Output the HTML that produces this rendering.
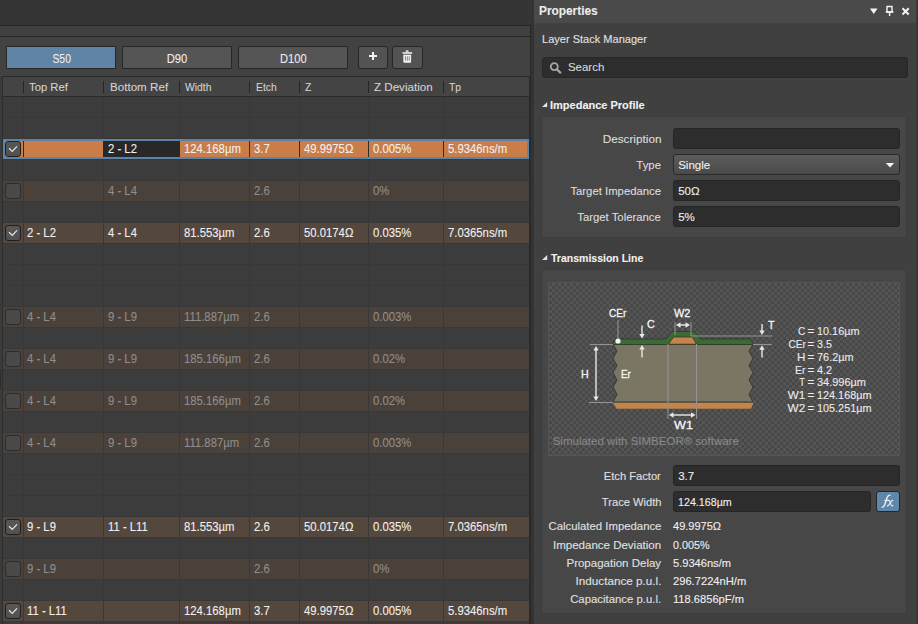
<!DOCTYPE html><html><head><meta charset="utf-8"><style>
html,body{margin:0;padding:0;}
body{width:918px;height:624px;position:relative;overflow:hidden;background:#353535;font-family:"Liberation Sans",sans-serif;}
div{position:absolute;box-sizing:border-box;-webkit-text-stroke:0.1px currentColor;}
svg{position:absolute;}
</style></head><body>
<div style="left:0px;top:25px;width:531px;height:1px;background:#262626;"></div>
<div style="left:0px;top:26px;width:530px;height:10px;background:#404040;"></div>
<div style="left:530px;top:26px;width:1px;height:11px;background:#262626;"></div>
<div style="left:0px;top:36px;width:531px;height:1px;background:#262626;"></div>
<div style="left:0px;top:37px;width:530px;height:39px;background:#424242;"></div>
<div style="left:530px;top:37px;width:1px;height:40px;background:#2a2a2a;"></div>
<div style="left:6px;top:46px;width:110px;height:23px;background:#6084a6;border:1px solid #262626;border-radius:1px;"></div>
<div style="left:122px;top:46px;width:110px;height:23px;background:#555555;border:1px solid #262626;border-radius:1px;"></div>
<div style="left:238px;top:46px;width:110px;height:23px;background:#555555;border:1px solid #262626;border-radius:1px;"></div>
<div style="left:50.62px;top:53.04px;font-size:12px;line-height:12px;color:#ececec;font-weight:normal;font-style:normal;font-family:'Liberation Sans';white-space:nowrap;transform:scaleX(0.8618);transform-origin:center 0;">S50</div>
<div style="left:166.39px;top:53.04px;font-size:12px;line-height:12px;color:#ececec;font-weight:normal;font-style:normal;font-family:'Liberation Sans';white-space:nowrap;transform:scaleX(0.9358);transform-origin:center 0;">D90</div>
<div style="left:278.86px;top:53.04px;font-size:12px;line-height:12px;color:#ececec;font-weight:normal;font-style:normal;font-family:'Liberation Sans';white-space:nowrap;transform:scaleX(0.9272);transform-origin:center 0;">D100</div>
<div style="left:358px;top:46px;width:30px;height:23px;background:#535353;border:1px solid #262626;border-radius:3px;"></div>
<div style="left:392px;top:46px;width:31px;height:23px;background:#535353;border:1px solid #262626;border-radius:3px;"></div>
<div style="left:369px;top:55px;width:8px;height:2px;background:#f2f2f2;"></div>
<div style="left:372px;top:52px;width:2px;height:8px;background:#f2f2f2;"></div>
<svg style="left:398px;top:46px" width="20" height="20" viewBox="398 46 20 20">
<rect x="405.6" y="50.2" width="3" height="2.2" rx="1" fill="#dcdcdc"/>
<rect x="402.5" y="52" width="9.6" height="2" fill="#cfcfcf"/>
<path d="M403.3 54.8 H411.1 V61.8 Q411.1 62.8 410.1 62.8 H404.3 Q403.3 62.8 403.3 61.8 Z" fill="#f2f2f2"/>
<rect x="404.9" y="56.3" width="1" height="4.4" fill="#858585"/>
<rect x="406.8" y="56.3" width="1" height="4.4" fill="#858585"/>
<rect x="408.7" y="56.3" width="1" height="4.4" fill="#858585"/>
</svg>
<div style="left:0px;top:76px;width:2px;height:548px;background:#3b3b3b;"></div>
<div style="left:2px;top:76px;width:1px;height:548px;background:#2e2e2e;"></div>
<div style="left:3px;top:76px;width:527px;height:1px;background:#2a2a2a;"></div>
<div style="left:3px;top:77px;width:526px;height:19px;background:#444444;"></div>
<div style="left:3px;top:96px;width:527px;height:1px;background:#2a2a2a;"></div>
<div style="left:3px;top:97px;width:526px;height:527px;background:#3c3c3c;"></div>
<div style="left:529px;top:76px;width:2px;height:548px;background:#2a2a2a;"></div>
<div style="left:0px;top:370px;width:1px;height:19px;background:#2e2e2e;"></div>
<div style="left:531px;top:0px;width:3px;height:624px;background:#333333;"></div>
<div style="left:23px;top:81px;width:1px;height:12px;background:#262626;"></div>
<div style="left:103px;top:81px;width:1px;height:12px;background:#262626;"></div>
<div style="left:179px;top:81px;width:1px;height:12px;background:#262626;"></div>
<div style="left:249px;top:81px;width:1px;height:12px;background:#262626;"></div>
<div style="left:299px;top:81px;width:1px;height:12px;background:#262626;"></div>
<div style="left:368px;top:81px;width:1px;height:12px;background:#262626;"></div>
<div style="left:443px;top:81px;width:1px;height:12px;background:#262626;"></div>
<div style="left:29.40px;top:82.39px;font-size:11px;line-height:11px;color:#d2d2d2;font-weight:normal;font-style:normal;font-family:'Liberation Sans';white-space:nowrap;transform:scaleX(1.0261);transform-origin:left 0;">Top Ref</div>
<div style="left:109.80px;top:82.39px;font-size:11px;line-height:11px;color:#d2d2d2;font-weight:normal;font-style:normal;font-family:'Liberation Sans';white-space:nowrap;transform:scaleX(1.0560);transform-origin:left 0;">Bottom Ref</div>
<div style="left:185.40px;top:82.39px;font-size:11px;line-height:11px;color:#d2d2d2;font-weight:normal;font-style:normal;font-family:'Liberation Sans';white-space:nowrap;transform:scaleX(0.9400);transform-origin:left 0;">Width</div>
<div style="left:255.80px;top:82.39px;font-size:11px;line-height:11px;color:#d2d2d2;font-weight:normal;font-style:normal;font-family:'Liberation Sans';white-space:nowrap;transform:scaleX(0.9400);transform-origin:left 0;">Etch</div>
<div style="left:305.40px;top:82.39px;font-size:11px;line-height:11px;color:#d2d2d2;font-weight:normal;font-style:normal;font-family:'Liberation Sans';white-space:nowrap;transform:scaleX(0.9400);transform-origin:left 0;">Z</div>
<div style="left:374.40px;top:82.39px;font-size:11px;line-height:11px;color:#d2d2d2;font-weight:normal;font-style:normal;font-family:'Liberation Sans';white-space:nowrap;transform:scaleX(1.0533);transform-origin:left 0;">Z Deviation</div>
<div style="left:449.40px;top:82.39px;font-size:11px;line-height:11px;color:#d2d2d2;font-weight:normal;font-style:normal;font-family:'Liberation Sans';white-space:nowrap;transform:scaleX(0.9400);transform-origin:left 0;">Tp</div>
<div style="left:3px;top:117px;width:526px;height:1px;background:#383838;"></div>
<div style="left:3px;top:138px;width:526px;height:1px;background:#383838;"></div>
<div style="left:3px;top:159px;width:526px;height:1px;background:#383838;"></div>
<div style="left:3px;top:180px;width:526px;height:1px;background:#383838;"></div>
<div style="left:3px;top:201px;width:526px;height:1px;background:#383838;"></div>
<div style="left:3px;top:222px;width:526px;height:1px;background:#383838;"></div>
<div style="left:3px;top:243px;width:526px;height:1px;background:#383838;"></div>
<div style="left:3px;top:264px;width:526px;height:1px;background:#383838;"></div>
<div style="left:3px;top:285px;width:526px;height:1px;background:#383838;"></div>
<div style="left:3px;top:306px;width:526px;height:1px;background:#383838;"></div>
<div style="left:3px;top:327px;width:526px;height:1px;background:#383838;"></div>
<div style="left:3px;top:348px;width:526px;height:1px;background:#383838;"></div>
<div style="left:3px;top:369px;width:526px;height:1px;background:#383838;"></div>
<div style="left:3px;top:390px;width:526px;height:1px;background:#383838;"></div>
<div style="left:3px;top:411px;width:526px;height:1px;background:#383838;"></div>
<div style="left:3px;top:432px;width:526px;height:1px;background:#383838;"></div>
<div style="left:3px;top:453px;width:526px;height:1px;background:#383838;"></div>
<div style="left:3px;top:474px;width:526px;height:1px;background:#383838;"></div>
<div style="left:3px;top:495px;width:526px;height:1px;background:#383838;"></div>
<div style="left:3px;top:516px;width:526px;height:1px;background:#383838;"></div>
<div style="left:3px;top:537px;width:526px;height:1px;background:#383838;"></div>
<div style="left:3px;top:558px;width:526px;height:1px;background:#383838;"></div>
<div style="left:3px;top:579px;width:526px;height:1px;background:#383838;"></div>
<div style="left:3px;top:600px;width:526px;height:1px;background:#383838;"></div>
<div style="left:3px;top:621px;width:526px;height:1px;background:#383838;"></div>
<div style="left:3px;top:642px;width:526px;height:1px;background:#383838;"></div>
<div style="left:23px;top:97px;width:1px;height:527px;background:#383838;"></div>
<div style="left:103px;top:97px;width:1px;height:527px;background:#383838;"></div>
<div style="left:179px;top:97px;width:1px;height:527px;background:#383838;"></div>
<div style="left:249px;top:97px;width:1px;height:527px;background:#383838;"></div>
<div style="left:299px;top:97px;width:1px;height:527px;background:#383838;"></div>
<div style="left:368px;top:97px;width:1px;height:527px;background:#383838;"></div>
<div style="left:443px;top:97px;width:1px;height:527px;background:#383838;"></div>
<div style="left:3px;top:139px;width:526px;height:20px;background:#5b84a8;"></div>
<div style="left:5px;top:141px;width:522px;height:16px;background:#c97d49;"></div>
<div style="left:103px;top:141px;width:77px;height:16px;background:#282828;"></div>
<div style="left:23px;top:141px;width:1px;height:16px;background:#2a2a2a;"></div>
<div style="left:249px;top:141px;width:1px;height:16px;background:#2e2e2e;"></div>
<div style="left:299px;top:141px;width:1px;height:16px;background:#2e2e2e;"></div>
<div style="left:368px;top:141px;width:1px;height:16px;background:#2e2e2e;"></div>
<div style="left:443px;top:141px;width:1px;height:16px;background:#2e2e2e;"></div>
<div style="left:5px;top:141px;width:16px;height:16px;background:linear-gradient(#575757,#515151);border:1px solid #1f1f1f;border-radius:3px;"></div>
<svg style="left:5px;top:141px" width="16" height="16" viewBox="0 0 16 16"><path d="M4 7.3 L7.3 10.4 L12 5.4" fill="none" stroke="#e6e6e6" stroke-width="1.25"/></svg>
<div style="left:107.70px;top:143.12px;font-size:12.5px;line-height:12.5px;color:#f0f0f0;font-weight:normal;font-style:normal;font-family:'Liberation Sans';white-space:nowrap;transform:scaleX(0.9050);transform-origin:left 0;">2 - L2</div>
<div style="left:183.70px;top:143.12px;font-size:12.5px;line-height:12.5px;color:#f0f0f0;font-weight:normal;font-style:normal;font-family:'Liberation Sans';white-space:nowrap;transform:scaleX(0.9050);transform-origin:left 0;">124.168µm</div>
<div style="left:253.70px;top:143.12px;font-size:12.5px;line-height:12.5px;color:#f0f0f0;font-weight:normal;font-style:normal;font-family:'Liberation Sans';white-space:nowrap;transform:scaleX(0.9050);transform-origin:left 0;">3.7</div>
<div style="left:303.70px;top:143.12px;font-size:12.5px;line-height:12.5px;color:#f0f0f0;font-weight:normal;font-style:normal;font-family:'Liberation Sans';white-space:nowrap;transform:scaleX(0.9050);transform-origin:left 0;">49.9975Ω</div>
<div style="left:372.70px;top:143.12px;font-size:12.5px;line-height:12.5px;color:#f0f0f0;font-weight:normal;font-style:normal;font-family:'Liberation Sans';white-space:nowrap;transform:scaleX(0.9050);transform-origin:left 0;">0.005%</div>
<div style="left:447.70px;top:143.12px;font-size:12.5px;line-height:12.5px;color:#f0f0f0;font-weight:normal;font-style:normal;font-family:'Liberation Sans';white-space:nowrap;transform:scaleX(0.9050);transform-origin:left 0;">5.9346ns/m</div>
<div style="left:3px;top:181px;width:20px;height:20px;background:#4b413b;"></div>
<div style="left:24px;top:181px;width:79px;height:20px;background:#4b413b;"></div>
<div style="left:104px;top:181px;width:75px;height:20px;background:#4b413b;"></div>
<div style="left:180px;top:181px;width:69px;height:20px;background:#4b413b;"></div>
<div style="left:250px;top:181px;width:49px;height:20px;background:#4b413b;"></div>
<div style="left:300px;top:181px;width:68px;height:20px;background:#4b413b;"></div>
<div style="left:369px;top:181px;width:74px;height:20px;background:#4b413b;"></div>
<div style="left:444px;top:181px;width:85px;height:20px;background:#4b413b;"></div>
<div style="left:5px;top:183px;width:16px;height:16px;background:#494949;border:1px solid #2c2c2c;border-radius:3px;"></div>
<div style="left:107.70px;top:185.12px;font-size:12.5px;line-height:12.5px;color:#8e8e8e;font-weight:normal;font-style:normal;font-family:'Liberation Sans';white-space:nowrap;transform:scaleX(0.9050);transform-origin:left 0;">4 - L4</div>
<div style="left:253.70px;top:185.12px;font-size:12.5px;line-height:12.5px;color:#8e8e8e;font-weight:normal;font-style:normal;font-family:'Liberation Sans';white-space:nowrap;transform:scaleX(0.9050);transform-origin:left 0;">2.6</div>
<div style="left:372.70px;top:185.12px;font-size:12.5px;line-height:12.5px;color:#8e8e8e;font-weight:normal;font-style:normal;font-family:'Liberation Sans';white-space:nowrap;transform:scaleX(0.9050);transform-origin:left 0;">0%</div>
<div style="left:3px;top:223px;width:20px;height:20px;background:#54473d;"></div>
<div style="left:24px;top:223px;width:79px;height:20px;background:#54473d;"></div>
<div style="left:104px;top:223px;width:75px;height:20px;background:#54473d;"></div>
<div style="left:180px;top:223px;width:69px;height:20px;background:#54473d;"></div>
<div style="left:250px;top:223px;width:49px;height:20px;background:#54473d;"></div>
<div style="left:300px;top:223px;width:68px;height:20px;background:#54473d;"></div>
<div style="left:369px;top:223px;width:74px;height:20px;background:#54473d;"></div>
<div style="left:444px;top:223px;width:85px;height:20px;background:#54473d;"></div>
<div style="left:5px;top:225px;width:16px;height:16px;background:linear-gradient(#575757,#515151);border:1px solid #1f1f1f;border-radius:3px;"></div>
<svg style="left:5px;top:225px" width="16" height="16" viewBox="0 0 16 16"><path d="M4 7.3 L7.3 10.4 L12 5.4" fill="none" stroke="#e6e6e6" stroke-width="1.25"/></svg>
<div style="left:27.30px;top:227.12px;font-size:12.5px;line-height:12.5px;color:#f0f0f0;font-weight:normal;font-style:normal;font-family:'Liberation Sans';white-space:nowrap;transform:scaleX(0.9050);transform-origin:left 0;">2 - L2</div>
<div style="left:107.70px;top:227.12px;font-size:12.5px;line-height:12.5px;color:#f0f0f0;font-weight:normal;font-style:normal;font-family:'Liberation Sans';white-space:nowrap;transform:scaleX(0.9050);transform-origin:left 0;">4 - L4</div>
<div style="left:183.70px;top:227.12px;font-size:12.5px;line-height:12.5px;color:#f0f0f0;font-weight:normal;font-style:normal;font-family:'Liberation Sans';white-space:nowrap;transform:scaleX(0.9050);transform-origin:left 0;">81.553µm</div>
<div style="left:253.70px;top:227.12px;font-size:12.5px;line-height:12.5px;color:#f0f0f0;font-weight:normal;font-style:normal;font-family:'Liberation Sans';white-space:nowrap;transform:scaleX(0.9050);transform-origin:left 0;">2.6</div>
<div style="left:303.70px;top:227.12px;font-size:12.5px;line-height:12.5px;color:#f0f0f0;font-weight:normal;font-style:normal;font-family:'Liberation Sans';white-space:nowrap;transform:scaleX(0.9050);transform-origin:left 0;">50.0174Ω</div>
<div style="left:372.70px;top:227.12px;font-size:12.5px;line-height:12.5px;color:#f0f0f0;font-weight:normal;font-style:normal;font-family:'Liberation Sans';white-space:nowrap;transform:scaleX(0.9050);transform-origin:left 0;">0.035%</div>
<div style="left:447.70px;top:227.12px;font-size:12.5px;line-height:12.5px;color:#f0f0f0;font-weight:normal;font-style:normal;font-family:'Liberation Sans';white-space:nowrap;transform:scaleX(0.9050);transform-origin:left 0;">7.0365ns/m</div>
<div style="left:3px;top:307px;width:20px;height:20px;background:#4b413b;"></div>
<div style="left:24px;top:307px;width:79px;height:20px;background:#4b413b;"></div>
<div style="left:104px;top:307px;width:75px;height:20px;background:#4b413b;"></div>
<div style="left:180px;top:307px;width:69px;height:20px;background:#4b413b;"></div>
<div style="left:250px;top:307px;width:49px;height:20px;background:#4b413b;"></div>
<div style="left:300px;top:307px;width:68px;height:20px;background:#4b413b;"></div>
<div style="left:369px;top:307px;width:74px;height:20px;background:#4b413b;"></div>
<div style="left:444px;top:307px;width:85px;height:20px;background:#4b413b;"></div>
<div style="left:5px;top:309px;width:16px;height:16px;background:#494949;border:1px solid #2c2c2c;border-radius:3px;"></div>
<div style="left:27.30px;top:311.12px;font-size:12.5px;line-height:12.5px;color:#8e8e8e;font-weight:normal;font-style:normal;font-family:'Liberation Sans';white-space:nowrap;transform:scaleX(0.9050);transform-origin:left 0;">4 - L4</div>
<div style="left:107.70px;top:311.12px;font-size:12.5px;line-height:12.5px;color:#8e8e8e;font-weight:normal;font-style:normal;font-family:'Liberation Sans';white-space:nowrap;transform:scaleX(0.9050);transform-origin:left 0;">9 - L9</div>
<div style="left:183.70px;top:311.12px;font-size:12.5px;line-height:12.5px;color:#8e8e8e;font-weight:normal;font-style:normal;font-family:'Liberation Sans';white-space:nowrap;transform:scaleX(0.9050);transform-origin:left 0;">111.887µm</div>
<div style="left:253.70px;top:311.12px;font-size:12.5px;line-height:12.5px;color:#8e8e8e;font-weight:normal;font-style:normal;font-family:'Liberation Sans';white-space:nowrap;transform:scaleX(0.9050);transform-origin:left 0;">2.6</div>
<div style="left:372.70px;top:311.12px;font-size:12.5px;line-height:12.5px;color:#8e8e8e;font-weight:normal;font-style:normal;font-family:'Liberation Sans';white-space:nowrap;transform:scaleX(0.9050);transform-origin:left 0;">0.003%</div>
<div style="left:3px;top:349px;width:20px;height:20px;background:#4b413b;"></div>
<div style="left:24px;top:349px;width:79px;height:20px;background:#4b413b;"></div>
<div style="left:104px;top:349px;width:75px;height:20px;background:#4b413b;"></div>
<div style="left:180px;top:349px;width:69px;height:20px;background:#4b413b;"></div>
<div style="left:250px;top:349px;width:49px;height:20px;background:#4b413b;"></div>
<div style="left:300px;top:349px;width:68px;height:20px;background:#4b413b;"></div>
<div style="left:369px;top:349px;width:74px;height:20px;background:#4b413b;"></div>
<div style="left:444px;top:349px;width:85px;height:20px;background:#4b413b;"></div>
<div style="left:5px;top:351px;width:16px;height:16px;background:#494949;border:1px solid #2c2c2c;border-radius:3px;"></div>
<div style="left:27.30px;top:353.12px;font-size:12.5px;line-height:12.5px;color:#8e8e8e;font-weight:normal;font-style:normal;font-family:'Liberation Sans';white-space:nowrap;transform:scaleX(0.9050);transform-origin:left 0;">4 - L4</div>
<div style="left:107.70px;top:353.12px;font-size:12.5px;line-height:12.5px;color:#8e8e8e;font-weight:normal;font-style:normal;font-family:'Liberation Sans';white-space:nowrap;transform:scaleX(0.9050);transform-origin:left 0;">9 - L9</div>
<div style="left:183.70px;top:353.12px;font-size:12.5px;line-height:12.5px;color:#8e8e8e;font-weight:normal;font-style:normal;font-family:'Liberation Sans';white-space:nowrap;transform:scaleX(0.9050);transform-origin:left 0;">185.166µm</div>
<div style="left:253.70px;top:353.12px;font-size:12.5px;line-height:12.5px;color:#8e8e8e;font-weight:normal;font-style:normal;font-family:'Liberation Sans';white-space:nowrap;transform:scaleX(0.9050);transform-origin:left 0;">2.6</div>
<div style="left:372.70px;top:353.12px;font-size:12.5px;line-height:12.5px;color:#8e8e8e;font-weight:normal;font-style:normal;font-family:'Liberation Sans';white-space:nowrap;transform:scaleX(0.9050);transform-origin:left 0;">0.02%</div>
<div style="left:3px;top:391px;width:20px;height:20px;background:#4b413b;"></div>
<div style="left:24px;top:391px;width:79px;height:20px;background:#4b413b;"></div>
<div style="left:104px;top:391px;width:75px;height:20px;background:#4b413b;"></div>
<div style="left:180px;top:391px;width:69px;height:20px;background:#4b413b;"></div>
<div style="left:250px;top:391px;width:49px;height:20px;background:#4b413b;"></div>
<div style="left:300px;top:391px;width:68px;height:20px;background:#4b413b;"></div>
<div style="left:369px;top:391px;width:74px;height:20px;background:#4b413b;"></div>
<div style="left:444px;top:391px;width:85px;height:20px;background:#4b413b;"></div>
<div style="left:5px;top:393px;width:16px;height:16px;background:#494949;border:1px solid #2c2c2c;border-radius:3px;"></div>
<div style="left:27.30px;top:395.12px;font-size:12.5px;line-height:12.5px;color:#8e8e8e;font-weight:normal;font-style:normal;font-family:'Liberation Sans';white-space:nowrap;transform:scaleX(0.9050);transform-origin:left 0;">4 - L4</div>
<div style="left:107.70px;top:395.12px;font-size:12.5px;line-height:12.5px;color:#8e8e8e;font-weight:normal;font-style:normal;font-family:'Liberation Sans';white-space:nowrap;transform:scaleX(0.9050);transform-origin:left 0;">9 - L9</div>
<div style="left:183.70px;top:395.12px;font-size:12.5px;line-height:12.5px;color:#8e8e8e;font-weight:normal;font-style:normal;font-family:'Liberation Sans';white-space:nowrap;transform:scaleX(0.9050);transform-origin:left 0;">185.166µm</div>
<div style="left:253.70px;top:395.12px;font-size:12.5px;line-height:12.5px;color:#8e8e8e;font-weight:normal;font-style:normal;font-family:'Liberation Sans';white-space:nowrap;transform:scaleX(0.9050);transform-origin:left 0;">2.6</div>
<div style="left:372.70px;top:395.12px;font-size:12.5px;line-height:12.5px;color:#8e8e8e;font-weight:normal;font-style:normal;font-family:'Liberation Sans';white-space:nowrap;transform:scaleX(0.9050);transform-origin:left 0;">0.02%</div>
<div style="left:3px;top:433px;width:20px;height:20px;background:#4b413b;"></div>
<div style="left:24px;top:433px;width:79px;height:20px;background:#4b413b;"></div>
<div style="left:104px;top:433px;width:75px;height:20px;background:#4b413b;"></div>
<div style="left:180px;top:433px;width:69px;height:20px;background:#4b413b;"></div>
<div style="left:250px;top:433px;width:49px;height:20px;background:#4b413b;"></div>
<div style="left:300px;top:433px;width:68px;height:20px;background:#4b413b;"></div>
<div style="left:369px;top:433px;width:74px;height:20px;background:#4b413b;"></div>
<div style="left:444px;top:433px;width:85px;height:20px;background:#4b413b;"></div>
<div style="left:5px;top:435px;width:16px;height:16px;background:#494949;border:1px solid #2c2c2c;border-radius:3px;"></div>
<div style="left:27.30px;top:437.12px;font-size:12.5px;line-height:12.5px;color:#8e8e8e;font-weight:normal;font-style:normal;font-family:'Liberation Sans';white-space:nowrap;transform:scaleX(0.9050);transform-origin:left 0;">4 - L4</div>
<div style="left:107.70px;top:437.12px;font-size:12.5px;line-height:12.5px;color:#8e8e8e;font-weight:normal;font-style:normal;font-family:'Liberation Sans';white-space:nowrap;transform:scaleX(0.9050);transform-origin:left 0;">9 - L9</div>
<div style="left:183.70px;top:437.12px;font-size:12.5px;line-height:12.5px;color:#8e8e8e;font-weight:normal;font-style:normal;font-family:'Liberation Sans';white-space:nowrap;transform:scaleX(0.9050);transform-origin:left 0;">111.887µm</div>
<div style="left:253.70px;top:437.12px;font-size:12.5px;line-height:12.5px;color:#8e8e8e;font-weight:normal;font-style:normal;font-family:'Liberation Sans';white-space:nowrap;transform:scaleX(0.9050);transform-origin:left 0;">2.6</div>
<div style="left:372.70px;top:437.12px;font-size:12.5px;line-height:12.5px;color:#8e8e8e;font-weight:normal;font-style:normal;font-family:'Liberation Sans';white-space:nowrap;transform:scaleX(0.9050);transform-origin:left 0;">0.003%</div>
<div style="left:3px;top:517px;width:20px;height:20px;background:#54473d;"></div>
<div style="left:24px;top:517px;width:79px;height:20px;background:#54473d;"></div>
<div style="left:104px;top:517px;width:75px;height:20px;background:#54473d;"></div>
<div style="left:180px;top:517px;width:69px;height:20px;background:#54473d;"></div>
<div style="left:250px;top:517px;width:49px;height:20px;background:#54473d;"></div>
<div style="left:300px;top:517px;width:68px;height:20px;background:#54473d;"></div>
<div style="left:369px;top:517px;width:74px;height:20px;background:#54473d;"></div>
<div style="left:444px;top:517px;width:85px;height:20px;background:#54473d;"></div>
<div style="left:5px;top:519px;width:16px;height:16px;background:linear-gradient(#575757,#515151);border:1px solid #1f1f1f;border-radius:3px;"></div>
<svg style="left:5px;top:519px" width="16" height="16" viewBox="0 0 16 16"><path d="M4 7.3 L7.3 10.4 L12 5.4" fill="none" stroke="#e6e6e6" stroke-width="1.25"/></svg>
<div style="left:27.30px;top:521.12px;font-size:12.5px;line-height:12.5px;color:#f0f0f0;font-weight:normal;font-style:normal;font-family:'Liberation Sans';white-space:nowrap;transform:scaleX(0.9050);transform-origin:left 0;">9 - L9</div>
<div style="left:107.70px;top:521.12px;font-size:12.5px;line-height:12.5px;color:#f0f0f0;font-weight:normal;font-style:normal;font-family:'Liberation Sans';white-space:nowrap;transform:scaleX(0.9050);transform-origin:left 0;">11 - L11</div>
<div style="left:183.70px;top:521.12px;font-size:12.5px;line-height:12.5px;color:#f0f0f0;font-weight:normal;font-style:normal;font-family:'Liberation Sans';white-space:nowrap;transform:scaleX(0.9050);transform-origin:left 0;">81.553µm</div>
<div style="left:253.70px;top:521.12px;font-size:12.5px;line-height:12.5px;color:#f0f0f0;font-weight:normal;font-style:normal;font-family:'Liberation Sans';white-space:nowrap;transform:scaleX(0.9050);transform-origin:left 0;">2.6</div>
<div style="left:303.70px;top:521.12px;font-size:12.5px;line-height:12.5px;color:#f0f0f0;font-weight:normal;font-style:normal;font-family:'Liberation Sans';white-space:nowrap;transform:scaleX(0.9050);transform-origin:left 0;">50.0174Ω</div>
<div style="left:372.70px;top:521.12px;font-size:12.5px;line-height:12.5px;color:#f0f0f0;font-weight:normal;font-style:normal;font-family:'Liberation Sans';white-space:nowrap;transform:scaleX(0.9050);transform-origin:left 0;">0.035%</div>
<div style="left:447.70px;top:521.12px;font-size:12.5px;line-height:12.5px;color:#f0f0f0;font-weight:normal;font-style:normal;font-family:'Liberation Sans';white-space:nowrap;transform:scaleX(0.9050);transform-origin:left 0;">7.0365ns/m</div>
<div style="left:3px;top:559px;width:20px;height:20px;background:#4b413b;"></div>
<div style="left:24px;top:559px;width:79px;height:20px;background:#4b413b;"></div>
<div style="left:104px;top:559px;width:75px;height:20px;background:#4b413b;"></div>
<div style="left:180px;top:559px;width:69px;height:20px;background:#4b413b;"></div>
<div style="left:250px;top:559px;width:49px;height:20px;background:#4b413b;"></div>
<div style="left:300px;top:559px;width:68px;height:20px;background:#4b413b;"></div>
<div style="left:369px;top:559px;width:74px;height:20px;background:#4b413b;"></div>
<div style="left:444px;top:559px;width:85px;height:20px;background:#4b413b;"></div>
<div style="left:5px;top:561px;width:16px;height:16px;background:#494949;border:1px solid #2c2c2c;border-radius:3px;"></div>
<div style="left:27.30px;top:563.12px;font-size:12.5px;line-height:12.5px;color:#8e8e8e;font-weight:normal;font-style:normal;font-family:'Liberation Sans';white-space:nowrap;transform:scaleX(0.9050);transform-origin:left 0;">9 - L9</div>
<div style="left:253.70px;top:563.12px;font-size:12.5px;line-height:12.5px;color:#8e8e8e;font-weight:normal;font-style:normal;font-family:'Liberation Sans';white-space:nowrap;transform:scaleX(0.9050);transform-origin:left 0;">2.6</div>
<div style="left:372.70px;top:563.12px;font-size:12.5px;line-height:12.5px;color:#8e8e8e;font-weight:normal;font-style:normal;font-family:'Liberation Sans';white-space:nowrap;transform:scaleX(0.9050);transform-origin:left 0;">0%</div>
<div style="left:3px;top:601px;width:20px;height:20px;background:#54473d;"></div>
<div style="left:24px;top:601px;width:79px;height:20px;background:#54473d;"></div>
<div style="left:104px;top:601px;width:75px;height:20px;background:#54473d;"></div>
<div style="left:180px;top:601px;width:69px;height:20px;background:#54473d;"></div>
<div style="left:250px;top:601px;width:49px;height:20px;background:#54473d;"></div>
<div style="left:300px;top:601px;width:68px;height:20px;background:#54473d;"></div>
<div style="left:369px;top:601px;width:74px;height:20px;background:#54473d;"></div>
<div style="left:444px;top:601px;width:85px;height:20px;background:#54473d;"></div>
<div style="left:5px;top:603px;width:16px;height:16px;background:linear-gradient(#575757,#515151);border:1px solid #1f1f1f;border-radius:3px;"></div>
<svg style="left:5px;top:603px" width="16" height="16" viewBox="0 0 16 16"><path d="M4 7.3 L7.3 10.4 L12 5.4" fill="none" stroke="#e6e6e6" stroke-width="1.25"/></svg>
<div style="left:27.30px;top:605.12px;font-size:12.5px;line-height:12.5px;color:#f0f0f0;font-weight:normal;font-style:normal;font-family:'Liberation Sans';white-space:nowrap;transform:scaleX(0.9050);transform-origin:left 0;">11 - L11</div>
<div style="left:183.70px;top:605.12px;font-size:12.5px;line-height:12.5px;color:#f0f0f0;font-weight:normal;font-style:normal;font-family:'Liberation Sans';white-space:nowrap;transform:scaleX(0.9050);transform-origin:left 0;">124.168µm</div>
<div style="left:253.70px;top:605.12px;font-size:12.5px;line-height:12.5px;color:#f0f0f0;font-weight:normal;font-style:normal;font-family:'Liberation Sans';white-space:nowrap;transform:scaleX(0.9050);transform-origin:left 0;">3.7</div>
<div style="left:303.70px;top:605.12px;font-size:12.5px;line-height:12.5px;color:#f0f0f0;font-weight:normal;font-style:normal;font-family:'Liberation Sans';white-space:nowrap;transform:scaleX(0.9050);transform-origin:left 0;">49.9975Ω</div>
<div style="left:372.70px;top:605.12px;font-size:12.5px;line-height:12.5px;color:#f0f0f0;font-weight:normal;font-style:normal;font-family:'Liberation Sans';white-space:nowrap;transform:scaleX(0.9050);transform-origin:left 0;">0.005%</div>
<div style="left:447.70px;top:605.12px;font-size:12.5px;line-height:12.5px;color:#f0f0f0;font-weight:normal;font-style:normal;font-family:'Liberation Sans';white-space:nowrap;transform:scaleX(0.9050);transform-origin:left 0;">5.9346ns/m</div>
<div style="left:534px;top:0px;width:382px;height:624px;background:#404040;"></div>
<div style="left:534px;top:0px;width:382px;height:23px;background:#4a4a4a;"></div>
<div style="left:916px;top:0px;width:2px;height:624px;background:#383838;"></div>
<div style="left:538.90px;top:4.74px;font-size:12px;line-height:12px;color:#ececec;font-weight:bold;font-style:normal;font-family:'Liberation Sans';white-space:nowrap;transform:scaleX(0.9873);transform-origin:left 0;">Properties</div>
<svg style="left:866px;top:4px" width="50" height="16" viewBox="866 4 50 16">
<path d="M870 8.5 H877.5 L873.75 14 Z" fill="#f4f4f4"/>
<path d="M887 6.5 H892 V12 H887 Z" fill="none" stroke="#f4f4f4" stroke-width="1.4"/>
<rect x="885.8" y="11.2" width="7.6" height="1.6" fill="#f4f4f4"/>
<rect x="888.9" y="12" width="1.4" height="4" fill="#f4f4f4"/>
<path d="M902.5 8.3 L908.7 14.5 M908.7 8.3 L902.5 14.5" stroke="#f4f4f4" stroke-width="2"/>
</svg>
<div style="left:542.00px;top:34.27px;font-size:11.5px;line-height:11.5px;color:#e0e0e0;font-weight:normal;font-style:normal;font-family:'Liberation Sans';white-space:nowrap;transform:scaleX(0.9597);transform-origin:left 0;">Layer Stack Manager</div>
<div style="left:542px;top:57px;width:366px;height:21px;background:#2d2d2d;border:1px solid #272727;border-radius:3px;"></div>
<svg style="left:548px;top:60px" width="16" height="16" viewBox="0 0 16 16">
<circle cx="6.3" cy="6.6" r="3.5" fill="none" stroke="#a6a6a6" stroke-width="1.8"/>
<path d="M8.8 9.2 L12.3 12.6" stroke="#a6a6a6" stroke-width="2.2" stroke-linecap="round"/>
</svg>
<div style="left:567.90px;top:62.17px;font-size:11.5px;line-height:11.5px;color:#d8d8d8;font-weight:normal;font-style:normal;font-family:'Liberation Sans';white-space:nowrap;">Search</div>
<svg style="left:542px;top:102px" width="6" height="6" viewBox="0 0 6 6"><path d="M5.2 0 V5 H0 Z" fill="#e4e4e4"/></svg>
<div style="left:550.40px;top:100.17px;font-size:11.5px;line-height:11.5px;color:#f0f0f0;font-weight:bold;font-style:normal;font-family:'Liberation Sans';white-space:nowrap;transform:scaleX(0.9560);transform-origin:left 0;">Impedance Profile</div>
<div style="left:541px;top:116px;width:366px;height:122px;background:#474747;border:1px solid #3d3d3d;border-radius:3px;"></div>
<div style="left:603.68px;top:133.97px;font-size:11.5px;line-height:11.5px;color:#dedede;font-weight:normal;font-style:normal;font-family:'Liberation Sans';white-space:nowrap;transform:scaleX(1.0239);transform-origin:right 0;">Description</div>
<div style="left:636.27px;top:159.97px;font-size:11.5px;line-height:11.5px;color:#dedede;font-weight:normal;font-style:normal;font-family:'Liberation Sans';white-space:nowrap;transform:scaleX(0.9850);transform-origin:right 0;">Type</div>
<div style="left:569.14px;top:185.97px;font-size:11.5px;line-height:11.5px;color:#dedede;font-weight:normal;font-style:normal;font-family:'Liberation Sans';white-space:nowrap;transform:scaleX(0.9850);transform-origin:right 0;">Target Impedance</div>
<div style="left:576.18px;top:211.97px;font-size:11.5px;line-height:11.5px;color:#dedede;font-weight:normal;font-style:normal;font-family:'Liberation Sans';white-space:nowrap;transform:scaleX(0.9850);transform-origin:right 0;">Target Tolerance</div>
<div style="left:673px;top:128px;width:227px;height:21px;background:#2d2d2d;border:1px solid #262626;border-radius:3px;"></div>
<div style="left:673px;top:154px;width:227px;height:21px;background:linear-gradient(#5c5c5c,#4a4a4a);border:1px solid #2a2a2a;border-radius:3px;"></div>
<svg style="left:884px;top:161px" width="12" height="8" viewBox="0 0 12 8"><path d="M1.8 2 H10.2 L6 6.4 Z" fill="#f4f4f4"/></svg>
<div style="left:678.20px;top:159.97px;font-size:11.5px;line-height:11.5px;color:#f0f0f0;font-weight:normal;font-style:normal;font-family:'Liberation Sans';white-space:nowrap;">Single</div>
<div style="left:673px;top:180px;width:227px;height:21px;background:#2d2d2d;border:1px solid #262626;border-radius:3px;"></div>
<div style="left:678.20px;top:185.97px;font-size:11.5px;line-height:11.5px;color:#f0f0f0;font-weight:normal;font-style:normal;font-family:'Liberation Sans';white-space:nowrap;">50Ω</div>
<div style="left:673px;top:206px;width:227px;height:21px;background:#2d2d2d;border:1px solid #262626;border-radius:3px;"></div>
<div style="left:678.20px;top:211.97px;font-size:11.5px;line-height:11.5px;color:#f0f0f0;font-weight:normal;font-style:normal;font-family:'Liberation Sans';white-space:nowrap;">5%</div>
<svg style="left:542px;top:255px" width="6" height="6" viewBox="0 0 6 6"><path d="M5.2 0 V5 H0 Z" fill="#e4e4e4"/></svg>
<div style="left:550.80px;top:253.17px;font-size:11.5px;line-height:11.5px;color:#f0f0f0;font-weight:bold;font-style:normal;font-family:'Liberation Sans';white-space:nowrap;transform:scaleX(0.9141);transform-origin:left 0;">Transmission Line</div>
<div style="left:541px;top:269px;width:366px;height:345px;background:#474747;border:1px solid #3d3d3d;border-radius:3px;"></div>
<div style="left:548px;top:282px;width:352px;height:174px;background:conic-gradient(#555 25%,#484848 0 50%,#555 0 75%,#484848 0) 0 0/6px 6px;border:1px solid #555;"></div>
<svg style="left:548px;top:282px" width="352" height="174" viewBox="548 282 352 174">
<polygon points="613,344.5 617,351 613,358.5 617,365.5 613,372.5 617,380 613,387 617,394.5 613,402 753,402 749,394.5 753,387 749,380 753,372.5 749,365.5 753,358.5 749,351 753,344.5" fill="#7b7663" stroke="#383838" stroke-width="1"/>
<polygon points="612.5,344.5 615.5,339 666,339 672,331.5 694.5,331.5 700.5,339 750.5,339 753.5,344.5" fill="#3c6a35" stroke="#2e3a2c" stroke-width="0.8"/>
<polygon points="668.5,344.2 673.5,337 692.5,337 696.5,344.2" fill="#c2854b" stroke="#3a3028" stroke-width="0.8"/>
<polygon points="613,402.8 753.5,402.8 751,408.8 616.5,408.8" fill="#c2854b"/>
<line x1="590" y1="344.5" x2="613" y2="344.5" stroke="#929292" stroke-width="1.1"/>
<line x1="589" y1="402.5" x2="613" y2="402.5" stroke="#929292" stroke-width="1.1"/>
<line x1="618" y1="320" x2="618" y2="341" stroke="#929292" stroke-width="1.1"/>
<line x1="668" y1="344" x2="668" y2="419" stroke="#929292" stroke-width="1.1"/>
<line x1="696.5" y1="344" x2="696.5" y2="419" stroke="#929292" stroke-width="1.1"/>
<line x1="675" y1="322" x2="675" y2="335" stroke="#929292" stroke-width="1.1"/>
<line x1="691" y1="322" x2="691" y2="336" stroke="#929292" stroke-width="1.1"/>
<line x1="691" y1="336" x2="772" y2="336" stroke="#929292" stroke-width="1.1"/>
<line x1="753" y1="344.5" x2="772" y2="344.5" stroke="#929292" stroke-width="1.1"/>
<line x1="596" y1="348" x2="596" y2="399" stroke="#e8e8e8" stroke-width="1.4"/>
<path d="M593.3,350.5 L598.7,350.5 L596,346 Z" fill="#e8e8e8"/>
<path d="M593.3,396.5 L598.7,396.5 L596,401 Z" fill="#e8e8e8"/>
<line x1="642" y1="325.5" x2="642" y2="334" stroke="#e8e8e8" stroke-width="1.4"/>
<path d="M639.3,334.0 L644.7,334.0 L642,338.5 Z" fill="#e8e8e8"/>
<line x1="642" y1="349" x2="642" y2="357.5" stroke="#e8e8e8" stroke-width="1.4"/>
<path d="M639.3,349.5 L644.7,349.5 L642,345 Z" fill="#e8e8e8"/>
<line x1="762" y1="324" x2="762" y2="331" stroke="#e8e8e8" stroke-width="1.4"/>
<path d="M759.3,330.5 L764.7,330.5 L762,335 Z" fill="#e8e8e8"/>
<line x1="762" y1="349" x2="762" y2="357.5" stroke="#e8e8e8" stroke-width="1.4"/>
<path d="M759.3,349.8 L764.7,349.8 L762,345.3 Z" fill="#e8e8e8"/>
<line x1="679" y1="325" x2="687" y2="325" stroke="#e8e8e8" stroke-width="1.4"/>
<path d="M680.5,322.3 L680.5,327.7 L676,325 Z" fill="#e8e8e8"/>
<path d="M685.5,322.3 L685.5,327.7 L690,325 Z" fill="#e8e8e8"/>
<line x1="672" y1="415" x2="692" y2="415" stroke="#e8e8e8" stroke-width="1.4"/>
<path d="M673.5,412.3 L673.5,417.7 L669,415 Z" fill="#e8e8e8"/>
<path d="M691.0,412.3 L691.0,417.7 L695.5,415 Z" fill="#e8e8e8"/>
<circle cx="618" cy="341" r="2.6" fill="#f4f4f4"/>
</svg>
<div style="left:608.60px;top:308.17px;font-size:11.5px;line-height:11.5px;color:#f6f6f6;font-weight:normal;font-style:normal;font-family:'Liberation Sans';white-space:nowrap;transform:scaleX(0.8735);transform-origin:left 0;-webkit-text-stroke:0.3px #f6f6f6;">CEr</div>
<div style="left:647.20px;top:318.67px;font-size:11.5px;line-height:11.5px;color:#f6f6f6;font-weight:normal;font-style:normal;font-family:'Liberation Sans';white-space:nowrap;transform:scaleX(0.9300);transform-origin:left 0;-webkit-text-stroke:0.3px #f6f6f6;">C</div>
<div style="left:673.90px;top:308.17px;font-size:11.5px;line-height:11.5px;color:#f6f6f6;font-weight:normal;font-style:normal;font-family:'Liberation Sans';white-space:nowrap;transform:scaleX(0.9507);transform-origin:left 0;-webkit-text-stroke:0.3px #f6f6f6;">W2</div>
<div style="left:767.90px;top:319.67px;font-size:11.5px;line-height:11.5px;color:#f6f6f6;font-weight:normal;font-style:normal;font-family:'Liberation Sans';white-space:nowrap;transform:scaleX(0.9300);transform-origin:left 0;-webkit-text-stroke:0.3px #f6f6f6;">T</div>
<div style="left:581.40px;top:368.67px;font-size:11.5px;line-height:11.5px;color:#f6f6f6;font-weight:normal;font-style:normal;font-family:'Liberation Sans';white-space:nowrap;transform:scaleX(0.9300);transform-origin:left 0;-webkit-text-stroke:0.3px #f6f6f6;">H</div>
<div style="left:621.40px;top:368.67px;font-size:11.5px;line-height:11.5px;color:#f6f6f6;font-weight:normal;font-style:normal;font-family:'Liberation Sans';white-space:nowrap;transform:scaleX(0.8609);transform-origin:left 0;-webkit-text-stroke:0.3px #f6f6f6;">Er</div>
<div style="left:674.40px;top:420.17px;font-size:11.5px;line-height:11.5px;color:#f6f6f6;font-weight:normal;font-style:normal;font-family:'Liberation Sans';white-space:nowrap;transform:scaleX(1.0957);transform-origin:left 0;-webkit-text-stroke:0.3px #f6f6f6;">W1</div>
<div style="left:797.10px;top:326.07px;font-size:11.5px;line-height:11.5px;color:#ececec;font-weight:normal;font-style:normal;font-family:'Liberation Sans';white-space:nowrap;transform:scaleX(0.8790);transform-origin:right 0;">C</div>
<div style="left:807.44px;top:326.07px;font-size:11.5px;line-height:11.5px;color:#ececec;font-weight:normal;font-style:normal;font-family:'Liberation Sans';white-space:nowrap;">=</div>
<div style="left:817.10px;top:326.07px;font-size:11.5px;line-height:11.5px;color:#ececec;font-weight:normal;font-style:normal;font-family:'Liberation Sans';white-space:nowrap;transform:scaleX(0.9448);transform-origin:left 0;">10.16µm</div>
<div style="left:785.60px;top:338.92px;font-size:11.5px;line-height:11.5px;color:#ececec;font-weight:normal;font-style:normal;font-family:'Liberation Sans';white-space:nowrap;transform:scaleX(0.8786);transform-origin:right 0;">CEr</div>
<div style="left:807.44px;top:338.92px;font-size:11.5px;line-height:11.5px;color:#ececec;font-weight:normal;font-style:normal;font-family:'Liberation Sans';white-space:nowrap;">=</div>
<div style="left:817.10px;top:338.92px;font-size:11.5px;line-height:11.5px;color:#ececec;font-weight:normal;font-style:normal;font-family:'Liberation Sans';white-space:nowrap;transform:scaleX(0.9258);transform-origin:left 0;">3.5</div>
<div style="left:797.10px;top:351.77px;font-size:11.5px;line-height:11.5px;color:#ececec;font-weight:normal;font-style:normal;font-family:'Liberation Sans';white-space:nowrap;transform:scaleX(1.0114);transform-origin:right 0;">H</div>
<div style="left:807.44px;top:351.77px;font-size:11.5px;line-height:11.5px;color:#ececec;font-weight:normal;font-style:normal;font-family:'Liberation Sans';white-space:nowrap;">=</div>
<div style="left:817.10px;top:351.77px;font-size:11.5px;line-height:11.5px;color:#ececec;font-weight:normal;font-style:normal;font-family:'Liberation Sans';white-space:nowrap;transform:scaleX(0.9485);transform-origin:left 0;">76.2µm</div>
<div style="left:793.90px;top:364.62px;font-size:11.5px;line-height:11.5px;color:#ececec;font-weight:normal;font-style:normal;font-family:'Liberation Sans';white-space:nowrap;transform:scaleX(0.9130);transform-origin:right 0;">Er</div>
<div style="left:807.44px;top:364.62px;font-size:11.5px;line-height:11.5px;color:#ececec;font-weight:normal;font-style:normal;font-family:'Liberation Sans';white-space:nowrap;">=</div>
<div style="left:817.10px;top:364.62px;font-size:11.5px;line-height:11.5px;color:#ececec;font-weight:normal;font-style:normal;font-family:'Liberation Sans';white-space:nowrap;transform:scaleX(0.9508);transform-origin:left 0;">4.2</div>
<div style="left:798.38px;top:377.47px;font-size:11.5px;line-height:11.5px;color:#ececec;font-weight:normal;font-style:normal;font-family:'Liberation Sans';white-space:nowrap;transform:scaleX(0.8114);transform-origin:right 0;">T</div>
<div style="left:807.44px;top:377.47px;font-size:11.5px;line-height:11.5px;color:#ececec;font-weight:normal;font-style:normal;font-family:'Liberation Sans';white-space:nowrap;">=</div>
<div style="left:817.10px;top:377.47px;font-size:11.5px;line-height:11.5px;color:#ececec;font-weight:normal;font-style:normal;font-family:'Liberation Sans';white-space:nowrap;transform:scaleX(0.9517);transform-origin:left 0;">34.996µm</div>
<div style="left:788.15px;top:390.32px;font-size:11.5px;line-height:11.5px;color:#ececec;font-weight:normal;font-style:normal;font-family:'Liberation Sans';white-space:nowrap;transform:scaleX(1.0087);transform-origin:right 0;">W1</div>
<div style="left:807.44px;top:390.32px;font-size:11.5px;line-height:11.5px;color:#ececec;font-weight:normal;font-style:normal;font-family:'Liberation Sans';white-space:nowrap;">=</div>
<div style="left:817.10px;top:390.32px;font-size:11.5px;line-height:11.5px;color:#ececec;font-weight:normal;font-style:normal;font-family:'Liberation Sans';white-space:nowrap;transform:scaleX(0.9433);transform-origin:left 0;">124.168µm</div>
<div style="left:788.15px;top:403.17px;font-size:11.5px;line-height:11.5px;color:#ececec;font-weight:normal;font-style:normal;font-family:'Liberation Sans';white-space:nowrap;transform:scaleX(1.0261);transform-origin:right 0;">W2</div>
<div style="left:807.44px;top:403.17px;font-size:11.5px;line-height:11.5px;color:#ececec;font-weight:normal;font-style:normal;font-family:'Liberation Sans';white-space:nowrap;">=</div>
<div style="left:817.10px;top:403.17px;font-size:11.5px;line-height:11.5px;color:#ececec;font-weight:normal;font-style:normal;font-family:'Liberation Sans';white-space:nowrap;transform:scaleX(0.9433);transform-origin:left 0;">105.251µm</div>
<div style="left:552.70px;top:436.17px;font-size:11.5px;line-height:11.5px;color:#888888;font-weight:normal;font-style:normal;font-family:'Liberation Sans';white-space:nowrap;">Simulated with SIMBEOR® software</div>
<div style="left:602.40px;top:471.17px;font-size:11.5px;line-height:11.5px;color:#e0e0e0;font-weight:normal;font-style:normal;font-family:'Liberation Sans';white-space:nowrap;transform:scaleX(0.9700);transform-origin:right 0;">Etch Factor</div>
<div style="left:673px;top:465px;width:227px;height:21px;background:#2d2d2d;border:1px solid #262626;border-radius:3px;"></div>
<div style="left:678.20px;top:471.17px;font-size:11.5px;line-height:11.5px;color:#f0f0f0;font-weight:normal;font-style:normal;font-family:'Liberation Sans';white-space:nowrap;">3.7</div>
<div style="left:599.64px;top:497.17px;font-size:11.5px;line-height:11.5px;color:#e0e0e0;font-weight:normal;font-style:normal;font-family:'Liberation Sans';white-space:nowrap;transform:scaleX(0.9700);transform-origin:right 0;">Trace Width</div>
<div style="left:673px;top:491px;width:198px;height:21px;background:#2d2d2d;border:1px solid #262626;border-radius:3px;"></div>
<div style="left:678.20px;top:497.17px;font-size:11.5px;line-height:11.5px;color:#f0f0f0;font-weight:normal;font-style:normal;font-family:'Liberation Sans';white-space:nowrap;transform:scaleX(0.9300);transform-origin:left 0;">124.168µm</div>
<div style="left:876px;top:491px;width:24px;height:21px;background:#5f86ab;border:1px solid #262626;border-radius:3px;"></div>
<svg style="left:876px;top:491px" width="24" height="21" viewBox="876 491 24 21">
<path d="M881.8 507.2 Q883.6 507.6 884.6 505 L887.2 497.4 Q888.2 494.6 890.6 495.3" fill="none" stroke="#f0f0f0" stroke-width="1.4"/>
<path d="M884.2 500.4 H888.4" stroke="#f0f0f0" stroke-width="1"/>
<path d="M887.6 500.6 Q889.2 499.8 889.9 501.8 L891.1 504.6 Q891.8 506.4 893.4 505.6" fill="none" stroke="#f0f0f0" stroke-width="1.1"/>
<path d="M893.2 500.4 Q892.2 500.2 891.2 501.6 L888.6 505.2 Q887.8 506.2 887 505.8" fill="none" stroke="#f0f0f0" stroke-width="1.1"/>
</svg>
<div style="left:546.67px;top:521.07px;font-size:11.5px;line-height:11.5px;color:#e0e0e0;font-weight:normal;font-style:normal;font-family:'Liberation Sans';white-space:nowrap;transform:scaleX(0.9866);transform-origin:right 0;">Calculated Impedance</div>
<div style="left:672.70px;top:521.07px;font-size:11.5px;line-height:11.5px;color:#f0f0f0;font-weight:normal;font-style:normal;font-family:'Liberation Sans';white-space:nowrap;transform:scaleX(0.9588);transform-origin:left 0;">49.9975Ω</div>
<div style="left:553.06px;top:540.07px;font-size:11.5px;line-height:11.5px;color:#e0e0e0;font-weight:normal;font-style:normal;font-family:'Liberation Sans';white-space:nowrap;">Impedance Deviation</div>
<div style="left:672.70px;top:540.07px;font-size:11.5px;line-height:11.5px;color:#f0f0f0;font-weight:normal;font-style:normal;font-family:'Liberation Sans';white-space:nowrap;transform:scaleX(0.9384);transform-origin:left 0;">0.005%</div>
<div style="left:566.48px;top:558.07px;font-size:11.5px;line-height:11.5px;color:#e0e0e0;font-weight:normal;font-style:normal;font-family:'Liberation Sans';white-space:nowrap;">Propagation Delay</div>
<div style="left:672.70px;top:558.07px;font-size:11.5px;line-height:11.5px;color:#f0f0f0;font-weight:normal;font-style:normal;font-family:'Liberation Sans';white-space:nowrap;transform:scaleX(0.9652);transform-origin:left 0;">5.9346ns/m</div>
<div style="left:576.71px;top:575.97px;font-size:11.5px;line-height:11.5px;color:#e0e0e0;font-weight:normal;font-style:normal;font-family:'Liberation Sans';white-space:nowrap;transform:scaleX(1.0179);transform-origin:right 0;">Inductance p.u.l.</div>
<div style="left:672.70px;top:575.97px;font-size:11.5px;line-height:11.5px;color:#f0f0f0;font-weight:normal;font-style:normal;font-family:'Liberation Sans';white-space:nowrap;transform:scaleX(0.9703);transform-origin:left 0;">296.7224nH/m</div>
<div style="left:569.04px;top:594.27px;font-size:11.5px;line-height:11.5px;color:#e0e0e0;font-weight:normal;font-style:normal;font-family:'Liberation Sans';white-space:nowrap;transform:scaleX(0.9874);transform-origin:right 0;">Capacitance p.u.l.</div>
<div style="left:672.70px;top:594.27px;font-size:11.5px;line-height:11.5px;color:#f0f0f0;font-weight:normal;font-style:normal;font-family:'Liberation Sans';white-space:nowrap;transform:scaleX(0.9672);transform-origin:left 0;">118.6856pF/m</div>
</body></html>
